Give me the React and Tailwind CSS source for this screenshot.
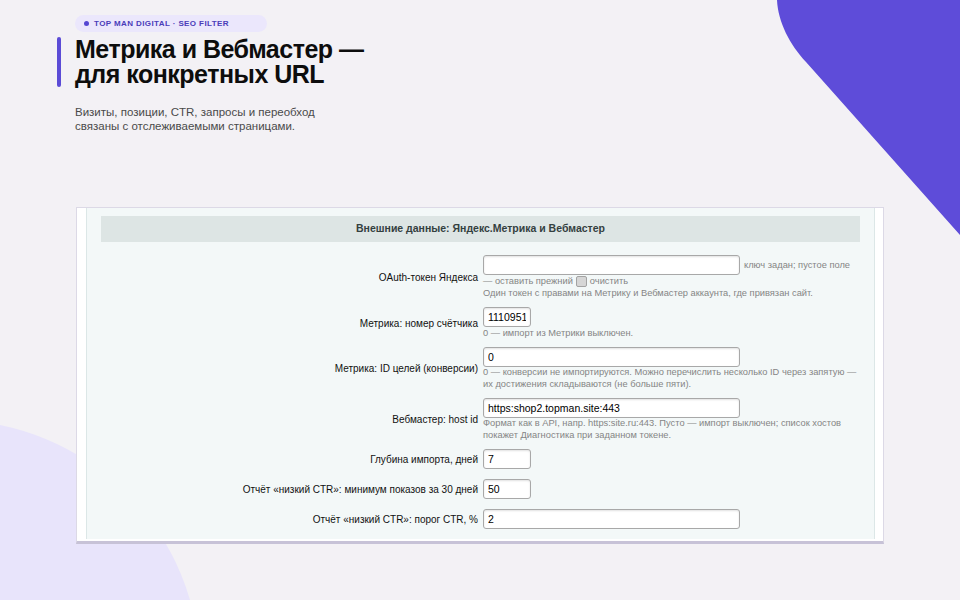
import React from 'react';

const font = { fontFamily: '"Liberation Sans", Arial, sans-serif' };

const Field = ({ value = '', wide = false }) => (
  <input
    readOnly
    value={value}
    className={
      'block h-[20px] shrink-0 rounded-[3px] border border-[#a8a8a8] bg-white px-[4px] text-[10.5px] text-black shadow-[inset_0_1px_2px_rgba(0,0,0,0.12)] outline-none ' +
      (wide ? 'w-[257px]' : 'w-[48px]')
    }
  />
);

const Help = ({ children }) => (
  <div className="whitespace-nowrap text-[9.3px] leading-[11.5px] text-[#858585]">{children}</div>
);

const Row = ({ label, short = false, children }) => (
  <>
    <div className={'pr-[5px] text-right text-[10px] text-[#111] ' + (short ? 'h-[22px] leading-[22px]' : '')}>
      {label}
    </div>
    <div className={'text-[10px] leading-[12px] ' + (short ? 'h-[22px]' : '')}>{children}</div>
  </>
);

const App = () => {
  return (
    <div className="relative h-[600px] w-[960px] overflow-hidden bg-[#f3f1f5]" style={font}>
      {/* decorative shapes */}
      <svg className="absolute left-0 top-0" width="960" height="600" viewBox="0 0 960 600">
        <circle cx="-50" cy="670" r="250" fill="#e8e4fb" />
        <path d="M777,0 C778,22 790,45 806,62 L960,235 L960,0 Z" fill="#5e4cd9" />
      </svg>

      <div className="relative">
        {/* header */}
        <div className="pl-[75px] pt-[15px]">
          <div className="flex h-[17px] w-[192px] items-center gap-[5px] rounded-full bg-[#ebe7fc] pl-[9px]">
            <span className="h-[5px] w-[5px] rounded-full bg-[#5546d2]" />
            <span className="whitespace-nowrap text-[8px] font-bold tracking-[0.4px] text-[#4a3db9]">
              TOP MAN DIGITAL · SEO FILTER
            </span>
          </div>
        </div>

        <div className="mt-[5px] flex gap-[14px] pl-[57px]">
          <div className="w-[4px] rounded-full bg-[#5b4bd6]" />
          <h1 className="text-[25px] font-bold leading-[25px] tracking-[-0.5px] text-[#0d0d0d]">
            Метрика и Вебмастер —<br />
            для конкретных URL
          </h1>
        </div>

        <p className="ml-[75px] mt-[18px] w-[260px] text-[11.5px] leading-[14px] text-[#4a4a4a]">
          Визиты, позиции, CTR, запросы и переобход<br />
          связаны с отслеживаемыми страницами.
        </p>

        {/* screenshot frame */}
        <div className="ml-[76px] mt-[74px] w-[808px] border border-b-[3px] border-[#dcd9e6] border-b-[#c7c2d7] bg-white pb-[2px] pl-[9px] pr-[8px]">
          <div className="border-x border-[#dce7e7] bg-[#f3f8f8] px-[14px] pb-[8px] pt-[8px]">
            <div className="flex h-[26px] items-center justify-center bg-[#dde5e4] text-[10.5px] font-bold text-[#34403f]">
              Внешние данные: Яндекс.Метрика и Вебмастер
            </div>

            <div className="mt-[13px] grid grid-cols-[382px_1fr] items-center gap-y-[8px]">
              <Row label="OAuth-токен Яндекса">
                <div className="flex items-center gap-[4px]">
                  <Field wide />
                  <span className="whitespace-nowrap text-[9.3px] text-[#858585]">ключ задан; пустое поле</span>
                </div>
                <div className="flex h-[12px] items-center whitespace-nowrap text-[9.3px] leading-[12px] text-[#858585]">
                  — оставить прежний
                  <span className="mx-[3px] inline-block h-[11px] w-[11px] rounded-[2px] border border-[#a3a3a3] bg-[#d6d6d6]" />
                  очистить
                </div>
                <div className="whitespace-nowrap text-[9.3px] leading-[12px] text-[#858585]">
                  Один токен с правами на Метрику и Вебмастер аккаунта, где привязан сайт.
                </div>
              </Row>

              <Row label="Метрика: номер счётчика">
                <Field value="11109516" />
                <div className="whitespace-nowrap text-[9.3px] leading-[12px] text-[#858585]">
                  0 — импорт из Метрики выключен.
                </div>
              </Row>

              <Row label="Метрика: ID целей (конверсии)">
                <Field value="0" wide />
                <Help>
                  0 — конверсии не импортируются. Можно перечислить несколько ID через запятую —<br />
                  их достижения складываются (не больше пяти).
                </Help>
              </Row>

              <Row label="Вебмастер: host id">
                <Field value="https:shop2.topman.site:443" wide />
                <Help>
                  Формат как в API, напр. https:site.ru:443. Пусто — импорт выключен; список хостов<br />
                  покажет Диагностика при заданном токене.
                </Help>
              </Row>

              <Row label="Глубина импорта, дней" short>
                <Field value="7" />
              </Row>

              <Row label="Отчёт «низкий CTR»: минимум показов за 30 дней" short>
                <Field value="50" />
              </Row>

              <Row label="Отчёт «низкий CTR»: порог CTR, %" short>
                <Field value="2" wide />
              </Row>
            </div>
          </div>
        </div>
      </div>
    </div>
  );
};

export default App;
